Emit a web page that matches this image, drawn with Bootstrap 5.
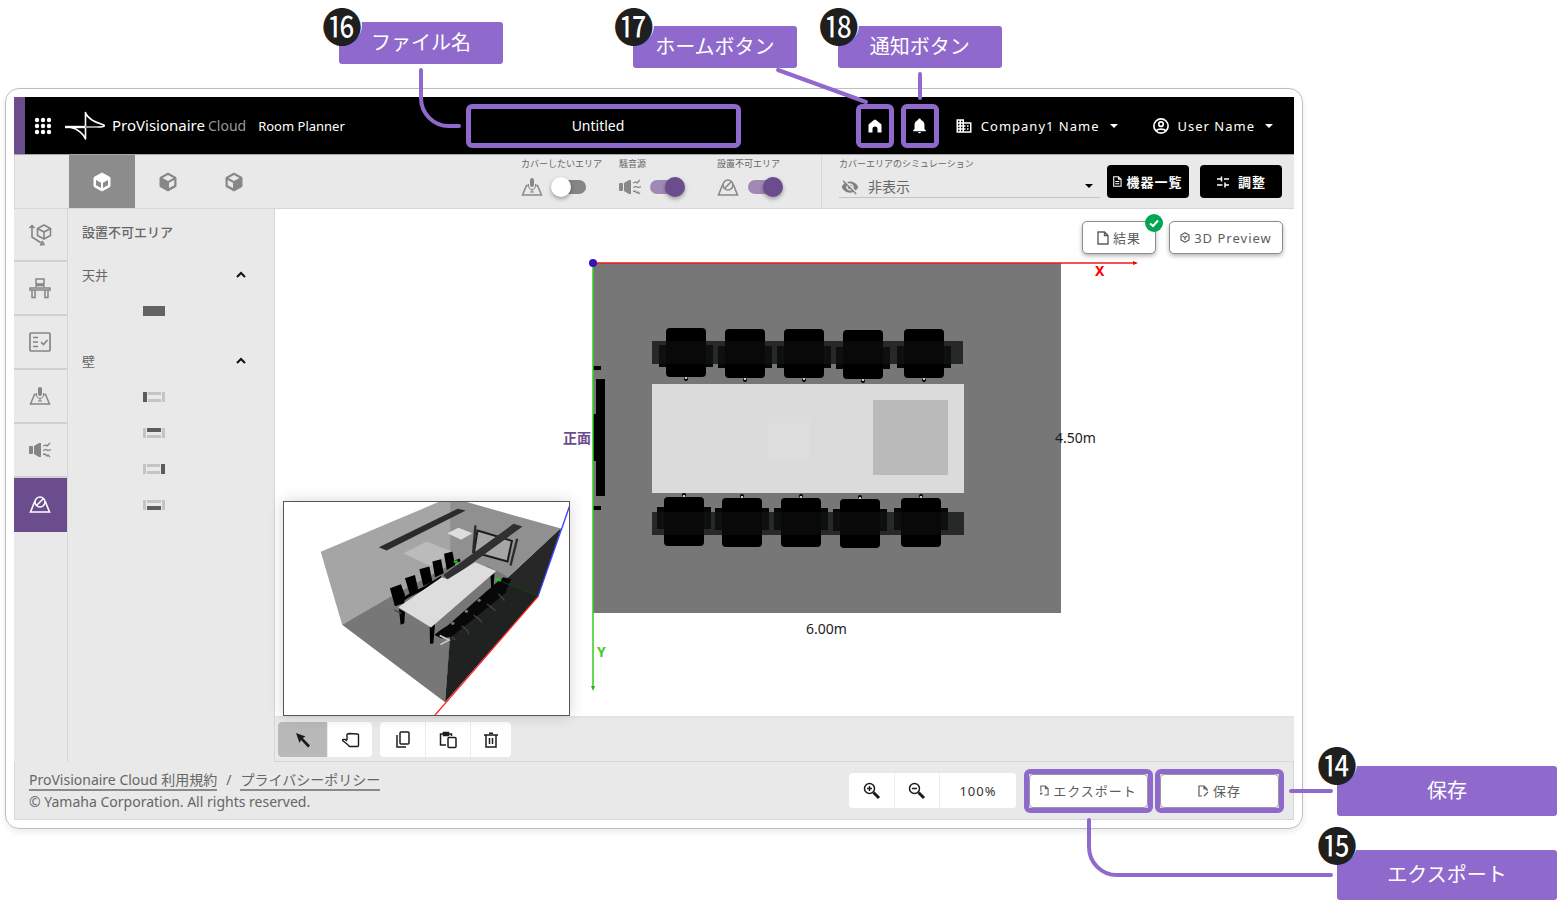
<!DOCTYPE html>
<html lang="ja">
<head>
<meta charset="utf-8">
<meta name="viewport" content="width=device-width, initial-scale=1">
<title>ProVisionaire Cloud Room Planner</title>
<link rel="stylesheet" href="https://cdn.jsdelivr.net/npm/bootstrap@5.3.0/dist/css/bootstrap.min.css">
<style>
  :root { --violet: #6b4c8c; --mark-violet: #8f6acc; --panel: #e9e9e9; --rule: #d6d6d6; --ink: #666; }
  body { font-family: "Noto Sans", "Noto Sans CJK JP", sans-serif; font-size: 13px; line-height: 20px; color: var(--ink); background: #fff; }
  svg { display: block; flex-shrink: 0; }
  button, select, input { font-family: inherit; }
  .stage { padding: 88px 254px 0 5px; min-height: 100vh; }
  .frame { border: 1px solid #bdbdbd; border-radius: 14px; padding: 8px; box-shadow: 0 3px 6px rgba(0,0,0,.08); }
  .spaced { letter-spacing: 1px; }

  /* header */
  .topbar { height: 57px; background: #000; border-left: 11px solid var(--violet); color: #fff; }
  .brand { width: 441px; padding-left: 9px; }
  .logo-mark { margin-left: 13px; }
  .wordmark { font-size: 15px; margin-left: 7px; }
  .wordmark .cloud { color: #999; margin-left: 3px; font-size: 14px; }
  .app-name { margin-left: 12px; }
  .topbar button { background: none; border: 0; color: inherit; padding: 0; font-size: 13px; line-height: 20px; }
  .file-name { background: none; border: 0; color: #fff; text-align: center; font-size: 14px; padding: 0 11px 0 0; outline: 0; }
  .tri { border: 4px solid transparent; border-top-color: currentColor; border-bottom: 0; }
  .topbar .tri { margin: 0 4px 0 10px; }
  .account { padding-right: 17px; }

  /* highlighted controls and their callouts */
  .spot { position: relative; height: 44px; border: 5px solid var(--mark-violet); border-radius: 6px; flex-shrink: 0; }
  .spot > .link-line { position: absolute; left: 0; top: 0; width: 1px; height: 1px; overflow: visible; fill: none; stroke: var(--mark-violet); stroke-width: 4; stroke-linecap: round; stroke-linejoin: round; z-index: 2; }
  .note { position: absolute; width: 164px; height: 42px; background: var(--mark-violet); border-radius: 3px; color: #fff; font-size: 20px; line-height: 28px; display: flex; align-items: center; justify-content: center; white-space: nowrap; }
  .note-wide { width: 220px; height: 50px; }
  .num { position: absolute; left: -20px; top: -22px; width: 40px; height: 40px; border-radius: 50%; background: #fff; color: #1f1f1f; font-family: "Noto Sans CJK JP", sans-serif; font-size: 40px; line-height: 40px; text-align: center; }
  .n16 { left: -132px; top: -87px; } .n16 .num { left: -17px; top: -17px; }
  .n17 { left: -228px; top: -83px; }
  .n18 { left: -68px; top: -83px; }
  .n17 .num, .n18 .num { left: -19px; top: -21px; }
  .n14 { left: 177px; top: -8px; }
  .n15 { left: 308px; top: 76px; } .n15 .num { top: -26px; }

  /* tool strip */
  .strip { height: 55px; background: var(--panel); border-top: 1px solid #a5a5a5; border-bottom: 1px solid var(--rule); border-left: 1px solid var(--rule); }
  .views { margin-left: 54px; }
  .view-tab { width: 66px; border: 0; background: none; color: #878787; display: flex; align-items: center; justify-content: center; padding: 0; }
  .view-tab.on { background: #8c8c8c; color: #fff; }
  .tiny { font-size: 9px; line-height: 14px; }
  .covers { padding-right: 6px; }
  .cover { width: 98px; padding-top: 2px; }
  .cover label { display: block; white-space: nowrap; margin-bottom: 6px; }
  .cover svg { color: #888; }
  .flip { appearance: none; width: 34px; height: 14px; border-radius: 7px; background: #858585; position: relative; margin: 0 0 0 9px; }
  .flip::before { content: ""; position: absolute; left: -1px; top: -3px; width: 20px; height: 20px; border-radius: 50%; background: #fff; box-shadow: 0 2px 4px rgba(0,0,0,.35); }
  .flip:checked { background: #a08ab4; }
  .flip:checked::before { left: 15px; background: var(--violet); }
  .simulate { width: 286px; border-left: 1px solid var(--rule); padding: 2px 7px 0 17px; }
  .simulate select { appearance: none; border: 0; border-bottom: 1px solid #c4c4c4; background: none; width: 100%; height: 27px; font-size: 14px; line-height: 20px; color: var(--ink); padding: 6px 0 0 29px; border-radius: 0; }
  .lay { position: absolute; pointer-events: none; }
  .black-btn { width: 82px; height: 33px; background: #000; color: #fff; border: 0; border-radius: 4px; font-size: 13px; line-height: 20px; font-weight: 700; padding: 0; display: flex; align-items: center; justify-content: center; }
  .black-btn svg, .out-btn svg { margin-right: 4px; }

  /* side rail and panel */
  .work { min-height: 553px; }
  .rail { width: 54px; background: var(--panel); border-right: 1px solid var(--rule); }
  .rail button { width: 53px; height: 54px; border: 0; border-bottom: 2px solid #d0d0d0; background: none; color: #858585; padding: 0 2px 0 0; display: flex; align-items: center; justify-content: center; }
  .rail button:first-child { height: 53px; }
  .rail button.on { background: var(--violet); color: #fff; border-color: var(--violet); }
  .side { width: 207px; background: var(--panel); border-right: 1px solid var(--rule); padding: 13px 27px 0 14px; }
  .side h2 { font-size: 13px; line-height: 20px; font-weight: 500; margin: 0 0 23px; }
  .fold { border: 0; background: none; padding: 0; font-size: 13px; line-height: 20px; color: var(--ink); width: 100%; display: flex; justify-content: space-between; align-items: center; }
  .swatches { padding: 21px 0 35px 61px; gap: 26px; }
  .swatch { border: 0; background: none; padding: 0; width: 22px; height: 10px; }
  .swatch.solid { background: #636363; }

  /* canvas */
  .plan { height: 507px; background: #fff; }
  .float-btn { height: 33px; background: #fff; border: 1px solid #8c8c8c; border-radius: 5px; color: #5c5c5c; box-shadow: 0 2px 4px rgba(0,0,0,.3); font-size: 13px; line-height: 20px; padding: 0; display: flex; align-items: center; justify-content: center; }
  .floats { position: absolute; right: 11px; top: 12px; gap: 13px; }
  .inset3d { position: absolute; left: 8px; bottom: 0; width: 287px; height: 215px; border: 1px solid #555; background: #fff; box-shadow: 0 0 14px rgba(0,0,0,.16); }
  .tools { height: 46px; background: var(--panel); border-bottom: 1px solid var(--rule); border-top: 2px solid #e4e4e4; padding-left: 3px; }
  .set { display: flex; height: 35px; background: #fff; border-radius: 4px; overflow: hidden; flex-shrink: 0; }
  .set button { border: 0; border-left: 1px solid #ececec; background: none; padding: 0; color: #1c1c1c; width: 45px; display: flex; align-items: center; justify-content: center; }
  .set button:first-child { border-left: 0; }
  .set button.on { background: #b9b9b9; width: 49px; }
  .zoomed { width: 77px; border: 0; border-left: 1px solid #ececec; text-align: center; color: #333; padding: 0; font-size: 13px; }

  /* footer */
  .base { height: 58px; background: var(--panel); border: 1px solid var(--rule); border-top: 0; padding: 0 9px 0 14px; }
  .legal { font-size: 14px; line-height: 22px; }
  .legal a { color: inherit; text-decoration: none; border-bottom: 2px solid #8a8a8a; display: inline-block; line-height: 18px; }
  .legal span { margin: 0 9px; }
  .out-btn { width: 100%; height: 100%; background: #fff; border: 1px solid #999; border-radius: 4px; color: #5c5c5c; font-size: 13px; line-height: 20px; padding: 0; display: flex; align-items: center; justify-content: center; }
</style>
</head>
<body>
<svg width="0" height="0" class="position-absolute" aria-hidden="true">
  <defs>
    <g id="i-mic"><path d="M7.500 8.500H5.500L1.500 18H20.500L16.500 8.500H14.500" fill="none" stroke="currentColor" stroke-width="1.500"/><rect x="9" y="1" width="4" height="9" rx="2" fill="currentColor"/><path d="M7.500 7v2a3.500 3.500 0 0 0 7 0V7M11 12v3M9 15h4" fill="none" stroke="currentColor" stroke-width="1"/></g>
    <g id="i-noise"><rect x="0" y="6" width="4" height="8" rx="1" fill="currentColor"/><path d="M5 6 L10 3 H12 V17 H10 L5 14Z" fill="currentColor"/><path d="M14 6l3-1 1 1 3-3M14 10.500l3-1 2 1 3-1M14 14.500l2-.5 2 2 1-1 2 2" fill="none" stroke="currentColor" stroke-width="1.300"/></g>
    <g id="i-noarea"><path d="M6 8 H5.500 L1.500 18 H20.500 L16.500 8 H16" fill="none" stroke="currentColor" stroke-width="1.600"/><circle cx="11" cy="8" r="5" fill="none" stroke="currentColor" stroke-width="1.600"/><path d="M7.500 11.500 L14.500 4.500" stroke="currentColor" stroke-width="1.600"/></g>
    <path id="i-up" d="M2 8 L6 4 L10 8" fill="none" stroke="#111" stroke-width="2"/>
    <g id="chairN"><rect x="-27" y="17" width="54" height="22" fill="#060707"/><rect x="-20" y="0" width="40" height="49" rx="4"/><circle cy="51" r="2"/><rect x="-1" y="49" width="2" height="2" fill="#ccc"/></g>
    <g id="chairS"><rect x="-27" y="10" width="54" height="22" fill="#060707"/><rect x="-20" y="0" width="40" height="49" rx="4"/><circle cy="-2" r="2"/><rect x="-1" y="-2" width="2" height="2" fill="#ccc"/></g>
  </defs>
</svg>

<main class="stage">
 <div class="frame">
  <header class="topbar d-flex align-items-center">
    <div class="brand d-flex align-items-center">
      <button type="button" aria-label="アプリ一覧"><svg width="18" height="18" viewBox="0 0 18 18" fill="#fff"><g id="dots"><circle cx="3" cy="3" r="2.200"/><circle cx="9" cy="3" r="2.200"/><circle cx="15" cy="3" r="2.200"/></g><use href="#dots" y="6"/><use href="#dots" y="12"/></svg></button>
      <svg class="logo-mark" width="40" height="30" viewBox="0 0 40 30" fill="none" stroke="#fff" stroke-width="1.600" stroke-linejoin="round"><path d="M0 16 H32 C37 16 39.500 15.500 39.500 14.500 C39.500 13.500 33 13 27 9 C23 6 21 4 20.500 1.500 V28 C19 24 13 17.500 6 16.500"/><path d="M0 16 H20" stroke-width="2.400"/><path d="M20 16 H33" stroke="#999" stroke-width="2"/></svg>
      <span class="wordmark">ProVisionaire<span class="cloud">Cloud</span></span>
      <span class="app-name">Room Planner</span>
    </div>
    <div class="spot" style="width:275px">
      <input class="file-name w-100 h-100" type="text" value="Untitled" aria-label="ファイル名">
      <svg class="link-line"><path d="M-50 -39 V-11 A28 28 0 0 0 -22 17 H-12"/></svg>
      <div class="note n16">ファイル名<span class="num">⓰</span></div>
    </div>
    <div class="account d-flex align-items-center ms-auto">
      <div class="spot" style="width:38px">
        <button type="button" class="w-100 h-100 d-flex align-items-center justify-content-center" aria-label="ホーム"><svg width="14" height="14" viewBox="0 0 14 14" fill="#fff"><path d="M7 .5 Q7.500 .5 8 1 L13 5 Q13.500 5.500 13.500 6 V13.500 H9.500 V9.500 A2.500 2 0 0 0 4.500 9.500 V13.500 H.5 V6 Q.5 5.500 1 5 L6 1 Q6.500 .5 7 .5Z"/></svg></button>
        <svg class="link-line"><path d="M-83 -39 L5 -7"/></svg>
        <div class="note n17">ホームボタン<span class="num">⓱</span></div>
      </div>
      <div class="spot" style="width:38px;margin-left:7px">
        <button type="button" class="w-100 h-100 d-flex align-items-center justify-content-center" aria-label="通知"><svg width="17" height="17" viewBox="0 0 24 24" fill="#fff"><path d="M21 19V20H3V19L5 17V11C5 7.900 7.030 5.170 10 4.290V4A2 2 0 0 1 14 4V4.290C16.970 5.170 19 7.900 19 11V17L21 19M14 21A2 2 0 0 1 10 21"/></svg></button>
        <svg class="link-line"><path d="M14 -35 V-11"/></svg>
        <div class="note n18">通知ボタン<span class="num">⓲</span></div>
      </div>
      <button type="button" class="spaced d-flex align-items-center" style="margin-left:16px"><svg class="me-2" width="18" height="18" viewBox="0 0 24 24" fill="#fff"><path d="M12 7V3H2v18h20V7H12zM6 19H4v-2h2v2zm0-4H4v-2h2v2zm0-4H4V9h2v2zm0-4H4V5h2v2zm4 12H8v-2h2v2zm0-4H8v-2h2v2zm0-4H8V9h2v2zm0-4H8V5h2v2zm10 12h-8v-2h2v-2h-2v-2h2v-2h-2V9h8v10zm-2-8h-2v2h2v-2zm0 4h-2v2h2v-2z"/></svg>Company1 Name<span class="tri"></span></button>
      <button type="button" class="spaced d-flex align-items-center" style="margin-left:30px"><svg class="me-2" width="18" height="18" viewBox="0 0 24 24" fill="none" stroke="#fff" stroke-width="2.200"><circle cx="12" cy="12" r="9.500"/><circle cx="12" cy="9.500" r="3"/><path d="M5.500 18.500C8 15.300 16 15.300 18.500 18.500"/></svg>User Name<span class="tri"></span></button>
    </div>
  </header>

  <div class="strip d-flex">
    <div class="views d-flex">
      <button type="button" class="view-tab on" aria-label="上面"><svg width="18" height="20" viewBox="0 0 18 20"><path d="M9 1 L17 5.500 V14.500 L9 19 L1 14.500 V5.500Z" fill="#fff" stroke="#fff" stroke-linejoin="round"/><path d="M3 8 L8 10.800 V16 L3 13.300ZM15 8 L10 10.800 V16 L15 13.300Z" fill="#8c8c8c"/></svg></button>
      <button type="button" class="view-tab" aria-label="正面"><svg width="18" height="20" viewBox="0 0 18 20"><path d="M9 1 L17 5.500 V14.500 L9 19 L1 14.500 V5.500Z" fill="currentColor" stroke="currentColor" stroke-linejoin="round"/><path d="M9 3 L14.500 6 L9 9 L3.500 6ZM15.300 8 L10 10.800 V16 L15.300 13.300Z" fill="#e9e9e9"/></svg></button>
      <button type="button" class="view-tab" aria-label="側面"><svg width="18" height="20" viewBox="0 0 18 20"><path d="M9 1 L17 5.500 V14.500 L9 19 L1 14.500 V5.500Z" fill="currentColor" stroke="currentColor" stroke-linejoin="round"/><path d="M9 3 L14.500 6 L9 9 L3.500 6ZM2.700 8 L8 10.800 V16 L2.700 13.300Z" fill="#e9e9e9"/></svg></button>
    </div>
    <div class="covers d-flex ms-auto">
      <div class="cover"><label class="tiny" for="c1">カバーしたいエリア</label><div class="d-flex align-items-center"><svg width="22" height="20" viewBox="0 0 22 20"><use href="#i-mic"/></svg><input id="c1" class="flip" type="checkbox"></div></div>
      <div class="cover"><label class="tiny" for="c2">騒音源</label><div class="d-flex align-items-center"><svg width="22" height="20" viewBox="0 0 22 20"><use href="#i-noise"/></svg><input id="c2" class="flip" type="checkbox" checked></div></div>
      <div class="cover"><label class="tiny" for="c3">設置不可エリア</label><div class="d-flex align-items-center"><svg width="22" height="20" viewBox="0 0 22 20"><use href="#i-noarea"/></svg><input id="c3" class="flip" type="checkbox" checked></div></div>
    </div>
    <div class="simulate">
      <label class="tiny d-block" for="sim">カバーエリアのシミュレーション</label>
      <div class="position-relative">
        <svg class="lay" style="left:2px;top:7px" width="18" height="18" viewBox="0 0 24 24" fill="#808080"><path d="M11.830 9L15 12.160V12A3 3 0 0 0 12 9ZM7.530 9.800L9.080 11.350A3 3 0 0 0 12.650 14.920L14.200 16.470A5 5 0 0 1 7.530 9.800M2 4.270L4.730 7C3.080 8.300 1.780 10 1 12C2.730 16.390 7 19.500 12 19.500C13.550 19.500 15.030 19.200 16.380 18.660L19.730 22L21 20.730L3.270 3M12 7A5 5 0 0 1 16.640 13.820L19.570 16.750C21.070 15.500 22.270 13.860 23 12C21.270 7.610 17 4.500 12 4.500C10.600 4.500 9.260 4.750 8 5.200L10.170 7.350C10.740 7.130 11.350 7 12 7Z"/></svg>
        <select id="sim"><option>非表示</option></select>
        <span class="tri lay text-black" style="right:7px;top:13px"></span>
      </div>
    </div>
    <div class="d-flex align-items-center" style="gap:11px;padding-right:12px">
      <button type="button" class="black-btn spaced"><svg width="9" height="11" viewBox="0 0 10 12" fill="none" stroke="#fff" stroke-width="1.200"><path d="M.8 .8H6L9 3.500V11.200H.8ZM6 .8V3.500H9M2.500 6H7M2.500 8.500H7"/></svg>機器一覧</button>
      <button type="button" class="black-btn spaced"><svg class="me-2" width="14" height="14" viewBox="0 0 14 14" fill="none" stroke="#fff" stroke-width="1.500"><path d="M1 4H6M5.500 1.500V6.500M8 4H13M1 10H6.500M9 10H13M9 7.500V12.500"/></svg>調整</button>
    </div>
  </div>

  <div class="work d-flex">
    <nav class="rail flex-shrink-0" aria-label="ツール">
      <button type="button" aria-label="部屋"><svg width="24" height="24" viewBox="0 0 24 24" fill="none" stroke="currentColor" stroke-width="1.600" stroke-linejoin="round"><path d="M16 2 L22.500 5.500 V12.500 L16 16 L9.500 12.500 V5.500Z M9.500 5.500 L16 9 L22.500 5.500 M16 9V16M4 2.500V14L14 20.500M1.500 5L4 2.500L6.500 5M12 22L16 21.500L14 18"/></svg></button>
      <button type="button" aria-label="家具"><svg width="22" height="22" viewBox="0 0 22 22" fill="none" stroke="currentColor" stroke-width="1.500"><path d="M7 2H15V7H7ZM8.500 7L6.500 10M13.500 7L15.500 10M8 8.500H14M1 11H21V13H1ZM3 13V20.500H6V13M16 13V20.500H19V13"/></svg></button>
      <button type="button" aria-label="チェックリスト"><svg width="22" height="20" viewBox="0 0 22 20" fill="none" stroke="currentColor" stroke-width="1.700"><rect x="1" y="1" width="20" height="18" rx="1"/><path d="M4 5.500H9M4 10H9M4 14.500H9M12 10L14.500 12.500L18.500 8"/></svg></button>
      <button type="button" aria-label="カバーエリア"><svg width="22" height="20" viewBox="0 0 22 20"><use href="#i-mic"/></svg></button>
      <button type="button" aria-label="騒音源"><svg width="22" height="20" viewBox="0 0 22 20"><use href="#i-noise"/></svg></button>
      <button type="button" class="on" aria-label="設置不可エリア"><svg width="22" height="20" viewBox="0 0 22 20"><use href="#i-noarea"/></svg></button>
    </nav>
    <aside class="side flex-shrink-0">
      <h2>設置不可エリア</h2>
      <button type="button" class="fold">天井<svg width="12" height="12" viewBox="0 0 12 12"><use href="#i-up"/></svg></button>
      <div class="swatches d-flex flex-column">
        <button type="button" class="swatch solid" aria-label="天井"></button>
      </div>
      <button type="button" class="fold">壁<svg width="12" height="12" viewBox="0 0 12 12"><use href="#i-up"/></svg></button>
      <div class="swatches d-flex flex-column">
        <button type="button" class="swatch" aria-label="左の壁"><svg width="22" height="10" fill="#c4c4c4"><rect width="4" height="10" fill="#5c5c5c"/><rect x="19" width="3" height="10"/><rect x="5" width="13" height="3"/><rect x="5" y="7" width="13" height="3"/></svg></button>
        <button type="button" class="swatch" aria-label="上の壁"><svg width="22" height="10" fill="#c4c4c4"><rect width="3" height="10"/><rect x="19" width="3" height="10"/><rect x="4" width="14" height="4" fill="#5c5c5c"/><rect x="4" y="7" width="14" height="3"/></svg></button>
        <button type="button" class="swatch" aria-label="右の壁"><svg width="22" height="10" fill="#c4c4c4"><rect width="3" height="10"/><rect x="18" width="4" height="10" fill="#5c5c5c"/><rect x="4" width="13" height="3"/><rect x="4" y="7" width="13" height="3"/></svg></button>
        <button type="button" class="swatch" aria-label="下の壁"><svg width="22" height="10" fill="#c4c4c4"><rect width="3" height="10"/><rect x="19" width="3" height="10"/><rect x="4" width="14" height="3"/><rect x="4" y="6" width="14" height="4" fill="#5c5c5c"/></svg></button>
      </div>
    </aside>

    <div class="flex-grow-1 d-flex flex-column">
      <section class="plan position-relative flex-grow-1" aria-label="平面図">
        <svg width="100%" height="100%" viewBox="275 209 1019 507" font-size="14">
          <rect x="593" y="263" width="468" height="350" fill="#777"/>
          <rect x="596" y="379" width="9" height="117"/><rect x="593" y="414" width="5" height="47"/><rect x="593" y="366" width="8" height="4"/><rect x="593" y="506" width="8" height="4"/>
          <rect x="652" y="384" width="312" height="109" fill="#dbdbdb"/>
          <rect x="767" y="417" width="43" height="43" fill="#ddd"/>
          <rect x="873" y="400" width="75" height="75" fill="#bababa"/>
          <rect x="652" y="341" width="311" height="23" fill="#202222"/>
          <use href="#chairN" x="686" y="328"/><use href="#chairN" x="745" y="329"/><use href="#chairN" x="804" y="329"/><use href="#chairN" x="863" y="330"/><use href="#chairN" x="924" y="329"/>
          <rect x="652" y="341" width="311" height="23" fill="#fff" opacity=".035"/>
          <rect x="652" y="512" width="312" height="23" fill="#202222"/>
          <use href="#chairS" x="684" y="497"/><use href="#chairS" x="742" y="498"/><use href="#chairS" x="801" y="498"/><use href="#chairS" x="860" y="499"/><use href="#chairS" x="921" y="498"/>
          <rect x="652" y="512" width="312" height="23" fill="#fff" opacity=".035"/>
          <path d="M593 263V688" stroke="#3c2" stroke-width="1.500"/><path d="M591 686h4l-2 5z" fill="#3a2"/>
          <path d="M593 263H1136" stroke="#f01818" stroke-width="1.500"/><path d="M1133 261v4l5-2z" fill="#f00"/>
          <circle cx="593" cy="263" r="4" fill="#3b0fc0"/>
          <text x="1095" y="276" fill="#f00" font-weight="700">X</text>
          <text x="597" y="657" fill="#4c2" font-weight="700">Y</text>
          <text x="563" y="443" fill="#6b4c8c" font-weight="700">正面</text>
          <text x="1055" y="443" fill="#1c1c1c">4.50m</text>
          <text x="806" y="634" fill="#1c1c1c">6.00m</text>
        </svg>
        <div class="inset3d">
          <svg width="100%" height="100%" viewBox="28 37 853 637">
            <path d="M138 186L490 37H525V230L202 404Z" fill="#a5a5a5"/>
            <path d="M525 37H575L857 116L690 270L525 240Z" fill="#909090"/>
            <path d="M202 404L345 322L525 225L640 230L700 262L525 450L510 636Z" fill="#777"/>
            <path d="M857 116L788 320L510 636L525 440L540 400L700 262Z" fill="#202222"/>
            <path d="M857 116L788 320L700 285V262Z" fill="#272727"/>
            <path d="M312 172L548 57L572 62L335 182Z" fill="#2b2b2b"/>
            <path d="M517 130L550 114L592 130L558 150Z" fill="#ddd"/>
            <path d="M385 190L455 155L532 186L465 228Z" fill="#bbb"/>
            <path d="M607 122L710 153L697 215L597 187Z" fill="#a6a6a6" stroke="#1c1c1c" stroke-width="6"/>
            <path d="M601 107L594 190M726 147L706 227" stroke="#2b2b2b" stroke-width="7"/>
            <path d="M505 255L715 102L742 110L520 272Z" fill="#303030"/>
            <path d="M345 295L378 283L390 315L388 340L360 348ZM390 265L420 255L430 300L405 315ZM433 238L463 230L472 275L445 288ZM472 215L498 208L506 250L480 262ZM507 192L532 185L540 225L515 240Z"/>
            <path d="M360 345L400 318L450 293L500 262M532 220L555 210" stroke="#000" stroke-width="9" fill="none"/>
            <path d="M478 435L655 285L685 262L708 268L690 310L610 375L530 440L500 445Z" fill="#080808"/>
            <path d="M480 430V400L655 250L650 290L520 405Z" fill="#777"/>
            <path d="M372 356L390 366L388 400L377 404ZM464 408L480 402L475 460L465 461ZM646 258L658 250L655 292L648 292Z"/>
            <path d="M370 352L500 262L518 268L600 217L663 243L468 412Z" fill="#ddd"/>
            <path d="M495 435L520 450L496 462M358 360L380 370M560 408l14 10l8 14M595 375l14 10l12 12M635 342l12 8l14 12M670 312l8 8l10 12M530 440l10 10" fill="none" stroke="#444" stroke-width="4"/>
            <path d="M494 436L522 450L496 463" fill="none" stroke="#ccc" stroke-width="5"/>
            <circle cx="533" cy="400" r="5" fill="#777"/><circle cx="574" cy="364" r="5" fill="#777"/><circle cx="612" cy="331" r="5" fill="#777"/>
            <path d="M536 215h12M660 266l18 6" stroke="#1fce1f" stroke-width="7"/><path d="M680 275L788 318" stroke="#163c16" stroke-width="3"/>
            <path d="M884 45L788 320" stroke="#34f" stroke-width="4"/><path d="M788 320L476 679" stroke="#f22" stroke-width="4"/>
          </svg>
        </div>
        <div class="floats d-flex">
          <button type="button" class="float-btn spaced position-relative" style="width:74px"><svg class="me-1" width="12" height="14" viewBox="0 0 12 14" fill="none" stroke="currentColor" stroke-width="1.400"><path d="M1 1H7.500L11 4.500V13H1ZM7.500 1V4.500H11"/></svg>結果
            <svg class="lay" style="right:-8px;top:-8px" width="18" height="18" viewBox="0 0 18 18"><circle cx="9" cy="9" r="9" fill="#00a651"/><path d="M5 9.500L8 12L13 6.500" fill="none" stroke="#fff" stroke-width="2"/></svg></button>
          <button type="button" class="float-btn spaced" style="width:114px"><svg class="me-1" width="10" height="11" viewBox="0 0 10 11" fill="none" stroke="currentColor" stroke-width="1.200" stroke-linejoin="round"><path d="M5 .8L9 3V8L5 10.200L1 8V3ZM2.500 4L5 5.500L7.500 4M5 5.500V8"/></svg>3D Preview</button>
        </div>
      </section>
      <div class="tools d-flex align-items-center gap-2">
        <div class="set">
          <button type="button" class="on" aria-label="選択"><svg width="16" height="16" viewBox="0 0 16 16" fill="#1c1c1c"><path d="M1 1L10.500 4.500L7.800 6L15 13.500L13 15.500L6 8L4.500 11Z"/></svg></button>
          <button type="button" aria-label="移動"><svg width="19" height="16" viewBox="0 0 19 16" fill="none" stroke="#1c1c1c" stroke-width="1.400" stroke-linejoin="round"><path d="M6 8V2.500L8 1.500L16.500 2Q17.500 2 17.500 3V13.500Q17.500 14.500 16.500 14.500H8.500L6 12L1.500 8.500Q1.500 7 4 7.500L6 9"/></svg></button>
        </div>
        <div class="set">
          <button type="button" aria-label="コピー"><svg width="16" height="17" viewBox="0 0 16 17" fill="none" stroke="#1c1c1c" stroke-width="1.500"><rect x="5" y="1" width="9" height="12" rx="1"/><path d="M2 4V16H11"/></svg></button>
          <button type="button" aria-label="貼り付け"><svg width="18" height="18" viewBox="0 0 18 18" fill="none" stroke="#1c1c1c" stroke-width="1.500"><path d="M7 14H1.500V3H12.500V5"/><rect x="4.500" y="1.500" width="5" height="3" fill="#1c1c1c"/><rect x="9" y="6.500" width="8" height="10" rx="1"/></svg></button>
          <button type="button" style="width:41px" aria-label="削除"><svg width="14" height="16" viewBox="0 0 14 16" fill="none" stroke="#1c1c1c" stroke-width="1.500"><path d="M0 3H14M2 3V15H12V3M5 1.200H9M5.500 6V12M8.500 6V12"/></svg></button>
        </div>
      </div>
    </div>
  </div>

  <footer class="base d-flex align-items-center">
    <div class="legal me-auto">
      <div><a href="#">ProVisionaire Cloud 利用規約</a><span>/</span><a href="#">プライバシーポリシー</a></div>
      <div>© Yamaha Corporation. All rights reserved.</div>
    </div>
    <div class="set me-2">
      <button type="button" aria-label="拡大"><svg width="18" height="18" viewBox="0 0 18 18" fill="none" stroke="#1c1c1c" stroke-width="1.500"><circle cx="6.500" cy="6.500" r="5"/><path d="M6.500 4V9M4 6.500H9"/><path d="M10.500 10.500L16 16" stroke-width="3"/></svg></button>
      <button type="button" aria-label="縮小"><svg width="18" height="18" viewBox="0 0 18 18" fill="none" stroke="#1c1c1c" stroke-width="1.500"><circle cx="6.500" cy="6.500" r="5"/><path d="M4 6.500H9"/><path d="M10.500 10.500L16 16" stroke-width="3"/></svg></button>
      <input class="zoomed spaced" type="text" value="100%" aria-label="表示倍率">
    </div>
    <div class="spot" style="width:129px;margin-right:2px">
      <button type="button" class="out-btn spaced"><svg width="9" height="11" viewBox="0 0 10 12" fill="none" stroke="currentColor" stroke-width="1.200"><path d="M1 7V1H6L9 4V11H5M6 1V4H9M1 9V11M0 9H3"/></svg>エクスポート</button>
      <svg class="link-line"><path d="M60 46 V73 A28 28 0 0 0 88 101 H302"/></svg>
      <div class="note note-wide n15">エクスポート<span class="num">⓯</span></div>
    </div>
    <div class="spot" style="width:129px">
      <button type="button" class="out-btn spaced"><svg width="11" height="12" viewBox="0 0 11 12" fill="none" stroke="currentColor" stroke-width="1.200"><path d="M9 6V4L6 1H1V11H4M6 1V4H9M6 11L10 7"/></svg>保存</button>
      <svg class="link-line"><path d="M131 17 H171"/></svg>
      <div class="note note-wide n14">保存<span class="num">⓮</span></div>
    </div>
  </footer>
 </div>
</main>
<script src="https://cdn.jsdelivr.net/npm/bootstrap@5.3.0/dist/js/bootstrap.bundle.min.js"></script>
</body>
</html>
